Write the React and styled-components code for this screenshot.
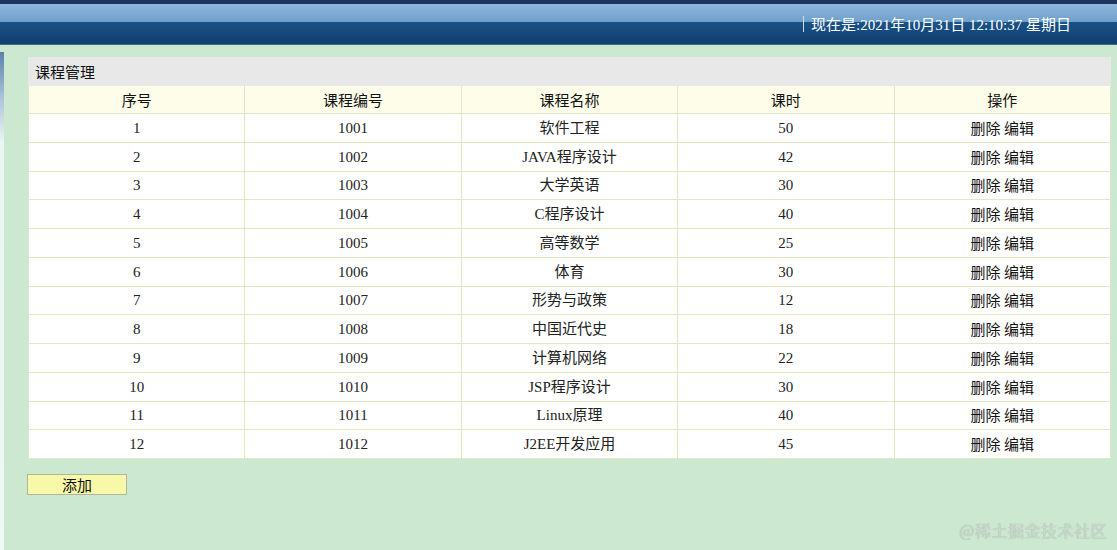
import React from 'react';
import styled, { createGlobalStyle } from 'styled-components';

const GlobalStyle = createGlobalStyle`
  html, body {
    margin: 0;
    padding: 0;
    background: #cde8d0;
  }
  body {
    font-family: "Liberation Serif", "Noto Sans CJK SC", serif;
    font-size: 15px;
    color: #222;
  }
`;

const courses = [
  { no: 1, code: '1001', name: '软件工程', hours: 50 },
  { no: 2, code: '1002', name: 'JAVA程序设计', hours: 42 },
  { no: 3, code: '1003', name: '大学英语', hours: 30 },
  { no: 4, code: '1004', name: 'C程序设计', hours: 40 },
  { no: 5, code: '1005', name: '高等数学', hours: 25 },
  { no: 6, code: '1006', name: '体育', hours: 30 },
  { no: 7, code: '1007', name: '形势与政策', hours: 12 },
  { no: 8, code: '1008', name: '中国近代史', hours: 18 },
  { no: 9, code: '1009', name: '计算机网络', hours: 22 },
  { no: 10, code: '1010', name: 'JSP程序设计', hours: 30 },
  { no: 11, code: '1011', name: 'Linux原理', hours: 40 },
  { no: 12, code: '1012', name: 'J2EE开发应用', hours: 45 },
];

const Page = styled.div`
  width: 1117px;
  height: 550px;
  overflow: hidden;
  position: relative;
  display: flex;
  flex-direction: column;
`;

const TopBar = styled.div`
  height: 45px;
  flex: none;
  display: flex;
  flex-direction: column;
  position: relative;
`;

const TopEdge = styled.div`
  height: 4px;
  background: #1d3763;
`;

const TopShine = styled.div`
  height: 18px;
  background: linear-gradient(#90b8dc, #6f9fc9);
`;

const TopBand = styled.div`
  flex: 1;
  background: linear-gradient(#1a5388, #123e6e);
  border-bottom: 1px solid #3d6a8e;
`;

const Clock = styled.div`
  position: absolute;
  right: 46px;
  top: 13px;
  color: #fff;
  font-size: 15px;
  display: flex;
  align-items: center;
  gap: 7px;
  &::before {
    content: '';
    width: 1px;
    height: 16px;
    background: #c8dcec;
  }
`;

const Body = styled.div`
  flex: 1;
  display: flex;
`;

const SideStrip = styled.div`
  width: 4px;
  margin-top: 7px;
  background: linear-gradient(#5b80aa, #a9c3d8 45px, #eaf6f2 90px, #eef8f4);
`;

const Content = styled.div`
  flex: 1;
  padding: 12px 6px 0 24px;
`;

const Panel = styled.div`
  width: 1083px;
`;

const PanelTitle = styled.div`
  height: 29px;
  background: #e8e8e8;
  padding-left: 7px;
  display: flex;
  align-items: center;
  font-family: "Noto Sans CJK SC", sans-serif;
  font-size: 15px;
  color: #111;
`;

const Table = styled.table`
  width: 100%;
  border-collapse: collapse;
  table-layout: fixed;
  background: #fff;
`;

const Th = styled.th`
  height: 27px;
  padding: 0;
  background: #fdfde9;
  border: 1px solid #e1e6c4;
  border-top: none;
  font-weight: normal;
  font-family: "Noto Sans CJK SC", sans-serif;
  font-size: 15px;
  color: #111;
`;

const Td = styled.td`
  height: 27.75px;
  padding: 0;
  text-align: center;
  border: 1px solid #e1e6c4;
  font-size: 15px;
  line-height: 18px;
  color: #222;
`;

const Ops = styled(Td)`
  font-family: "Noto Sans CJK SC", sans-serif;
  color: #111;
`;

const AddButton = styled.button`
  margin-top: 15px;
  margin-left: -1px;
  width: 100px;
  height: 21px;
  padding: 0;
  background: #f8f9a8;
  border: 1px solid #b4b49a;
  font-family: "Noto Sans CJK SC", sans-serif;
  font-size: 15px;
  color: #111;
  line-height: 19px;
`;

const Watermark = styled.div`
  position: absolute;
  right: 10px;
  bottom: 8px;
  font-family: "Noto Sans CJK SC", sans-serif;
  font-size: 16px;
  color: #c9dacd;
  text-shadow: 0 0 1px #9aa89e;
  letter-spacing: 0.5px;
`;

export default function App() {
  return (
    <Page>
      <GlobalStyle />
      <TopBar>
        <TopEdge />
        <TopShine />
        <TopBand />
        <Clock>现在是:2021年10月31日 12:10:37 星期日</Clock>
      </TopBar>
      <Body>
        <SideStrip />
        <Content>
          <Panel>
            <PanelTitle>课程管理</PanelTitle>
            <Table>
              <thead>
                <tr>
                  <Th>序号</Th>
                  <Th>课程编号</Th>
                  <Th>课程名称</Th>
                  <Th>课时</Th>
                  <Th>操作</Th>
                </tr>
              </thead>
              <tbody>
                {courses.map((c) => (
                  <tr key={c.no}>
                    <Td>{c.no}</Td>
                    <Td>{c.code}</Td>
                    <Td>{c.name}</Td>
                    <Td>{c.hours}</Td>
                    <Ops>删除 编辑</Ops>
                  </tr>
                ))}
              </tbody>
            </Table>
          </Panel>
          <AddButton>添加</AddButton>
        </Content>
      </Body>
      <Watermark>@稀土掘金技术社区</Watermark>
    </Page>
  );
}
